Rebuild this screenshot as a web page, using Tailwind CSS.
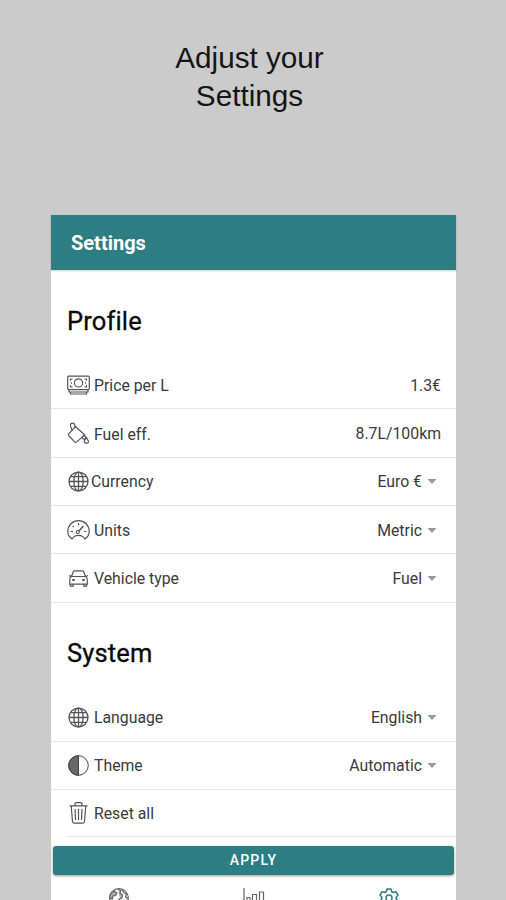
<!DOCTYPE html>
<html lang="en">
<head>
<meta charset="utf-8">
<title>Settings</title>
<script src="https://cdn.jsdelivr.net/npm/@tailwindcss/browser@4"></script>
</head>
<body class="h-[900px] w-[506px] overflow-hidden bg-[#cbcbcb] font-['Roboto',sans-serif] text-[#3a3a3a]">
<svg class="hidden">
  <symbol id="globe" viewBox="0 0 24 24" fill="none" stroke="currentColor" stroke-width="1.5"><circle cx="12" cy="12" r="10.8"/><ellipse cx="12" cy="12" rx="5.3" ry="10.8"/><path d="M12 1v22M1 12h22M3 6.5h18M3 17.5h18"/></symbol>
</svg>
<div class="flex h-full flex-col">
  <h1 class="h-[215px] shrink-0 pt-[39px] pr-[7px] text-center font-['Liberation_Sans',sans-serif] text-[29.7px] leading-[38px] text-[#151515]">Adjust your<br>Settings</h1>
  <main class="ml-[51px] flex h-[685px] w-[405px] flex-col bg-white">
    <header class="flex h-[55px] shrink-0 items-center bg-[#2d7e82] pl-[20px] text-[20px] font-bold text-white shadow-[0_1px_2px_#0003]"><span>Settings</span></header>
    <h2 class="h-[91px] shrink-0 pt-[35px] pl-[16px] text-[25.5px] leading-[32px] tracking-[0.15px] text-[#0a0a0a] [-webkit-text-stroke:0.3px_#0a0a0a]">Profile</h2>
    <section class="text-[15.8px]">
      <div class="flex h-[48px] items-center border-b border-[#e4e4e4] pr-[15px] pl-[16px]">
        <svg class="mr-[4px] h-[20px] w-[23px] text-[#555]" viewBox="0 0 23 20" fill="none" stroke="currentColor" stroke-width="1.2"><rect x=".7" y="1.2" width="21.6" height="13.4" rx="1"/><circle cx="11.5" cy="7.9" r="4.1"/><path d="M2 15v2h19v-2M3.5 17v2h16v-2M3.5 5.8V4h2M17.5 4h2v1.8M3.5 10v2h2M17.5 12h2v-2"/><path d="M4 7.9h1M18 7.9h1" stroke-width="1.5"/></svg>
        <span class="mt-[2px]">Price per L</span><span class="mt-[2px] ml-auto">1.3€</span>
      </div>
      <div class="flex h-[49px] items-center border-b border-[#e4e4e4] pr-[15px] pl-[16px]">
        <svg class="mr-[4px] h-[22px] w-[23px] text-[#555]" viewBox="0 0 23 22" fill="none" stroke="currentColor" stroke-width="1.2"><path d="M8.5 4.5 17.8 13 9.4 20.1q-.9.7-1.8-.2L1.7 13.5q-.7-.8 0-1.6ZM5 8 3.6 4.2q-.7-3 2-3 1.9 0 2.3 2.8l.3 2.1"/><path d="M19.5 15.5q-4 4.5-.9 5.6 3.9.6 2.4-2.8Z"/><circle cx="17" cy="15.6" r="1.6"/></svg>
        <span class="mt-[3px]">Fuel eff.</span><span class="mt-[1px] ml-auto">8.7L/100km</span>
      </div>
      <div class="flex h-[48px] items-center border-b border-[#e4e4e4] pr-[19px] pl-[17px]">
        <svg class="mr-[2px] size-[21px] text-[#555]"><use href="#globe"/></svg>
        <span class="mt-[1px]">Currency</span><span class="mt-[1px] ml-auto">Euro €</span>
        <svg class="ml-[5px] h-[5px] w-[10px]" viewBox="0 0 10 5"><path d="M.5 0h9L5 5Z" fill="#999"/></svg>
      </div>
      <div class="flex h-[48px] items-center border-b border-[#e4e4e4] pr-[19px] pl-[16px]">
        <svg class="mr-[4px] h-[20px] w-[23px] text-[#555]" viewBox="0 0 23 20" fill="none" stroke="currentColor" stroke-width="1.2" stroke-linejoin="round"><path d="M5.2 19Q.8 16.5.8 11.3a10.7 10.7 0 0 1 21.4 0q0 5.2-4.4 7.7l-2-2.5q-4.3-2.4-8.6 0Z"/><path d="M3.6 11.5H6M17 11.5h2.4M11.5 3v2.2M5.7 6l1.2 1.2"/><circle cx="10.8" cy="12" r="1.5"/><path d="m12 11 4.3-5" stroke-width="1.5"/></svg>
        <span class="mt-[2px]">Units</span><span class="mt-[2px] ml-auto">Metric</span>
        <svg class="mt-px ml-[5px] h-[5px] w-[10px]" viewBox="0 0 10 5"><path d="M.5 0h9L5 5Z" fill="#999"/></svg>
      </div>
      <div class="flex h-[49px] items-center border-b border-[#e4e4e4] pr-[19px] pl-[18px]">
        <svg class="mr-[6px] h-[17px] w-[19px] text-[#555]" viewBox="0 0 19 17" fill="none" stroke="currentColor" stroke-width="1.2"><path d="M2.5 6.5 4.3 1.8Q4.6.8 5.6.8h7.8q1 0 1.3 1l1.8 4.7q1.8 1 1.8 3.3v4.4H.7V9.8q0-2.3 1.8-3.3ZM2.5 6.5h14M0 5.5l2.5 1M19 5.5l-2.5 1M1.4 14.2v2h2.8v-2M14.8 14.2v2h2.8v-2"/><path d="M3.2 10h2.5M13.3 10h2.5" stroke-width="1.8"/></svg>
        <span class="mt-[2px]">Vehicle type</span><span class="mt-[2px] ml-auto">Fuel</span>
        <svg class="ml-[5px] h-[5px] w-[10px]" viewBox="0 0 10 5"><path d="M.5 0h9L5 5Z" fill="#999"/></svg>
      </div>
    </section>
    <h2 class="h-[90px] shrink-0 pt-[34px] pl-[16px] text-[25.5px] leading-[32px] tracking-[0.15px] text-[#0a0a0a] [-webkit-text-stroke:0.3px_#0a0a0a]">System</h2>
    <section class="text-[15.8px]">
      <div class="flex h-[49px] items-center border-b border-[#e4e4e4] pr-[19px] pl-[17px]">
        <svg class="mr-[5px] size-[21px] text-[#555]"><use href="#globe"/></svg>
        <span class="mt-[1px]">Language</span><span class="mt-[1px] ml-auto">English</span>
        <svg class="ml-[5px] h-[5px] w-[10px]" viewBox="0 0 10 5"><path d="M.5 0h9L5 5Z" fill="#999"/></svg>
      </div>
      <div class="flex h-[48px] items-center border-b border-[#e4e4e4] pr-[19px] pl-[17px]">
        <svg class="mr-[5px] size-[21px] text-[#444]" viewBox="0 0 21 21" fill="none" stroke="currentColor"><circle cx="10.5" cy="10.5" r="9.8"/><path d="M10.5.7a9.8 9.8 0 0 0 0 19.6Z" fill="#666"/></svg>
        <span class="mt-[1px]">Theme</span><span class="mt-[1px] ml-auto">Automatic</span>
        <svg class="ml-[5px] h-[5px] w-[10px]" viewBox="0 0 10 5"><path d="M.5 0h9L5 5Z" fill="#999"/></svg>
      </div>
      <div class="ml-[16px] flex h-[47px] items-center border-b border-[#e6e6ea] pl-[2px]">
        <svg class="mr-[6px] h-[22px] w-[19px] text-[#555]" viewBox="0 0 19 22" fill="none" stroke="currentColor" stroke-width="1.2"><path d="M.5 3.9h18M6 3.7V2q0-1.3 1.3-1.3h4.4Q13 .7 13 2v1.7M2.2 4l1.3 15.5q.2 1.7 1.7 1.7h8.6q1.5 0 1.7-1.7L16.8 4M9.5 7v11M6 7l.5 11M13 7l-.5 11"/></svg>
        <span class="mt-[1px]">Reset all</span>
      </div>
    </section>
    <button class="mx-[2px] mt-[9px] flex h-[29px] shrink-0 items-center justify-center rounded-[3px] bg-[#2d7e82] text-[14px] font-medium tracking-[1.2px] text-white shadow-[0_1px_3px_#0006]">APPLY</button>
    <nav class="grid h-[25px] grid-cols-3 justify-items-center overflow-hidden pt-[13px] text-[#666]">
      <svg class="size-[20px]" viewBox="0 0 20 20" fill="none" stroke="currentColor" stroke-width="1.2"><circle cx="10" cy="10" r="9.3"/><path d="m3 4 2.5-.7L8 5 6.5 7.5 4 8l-.8 3L1 10V7ZM9 1l3 1.5L11 5l2.5 2-.5 3-3 1 2 4M13.5 1.5l1 3 3 1.5-1 3 2.5 2" fill="#aaa"/></svg>
      <svg class="h-[20px] w-[22px]" viewBox="0 0 22 20" fill="none" stroke="currentColor" stroke-width="1.2"><path d="M1 0v19h21M4 19V9.5h3V19M9.5 19V6.5h4V19M16.5 19V4h4v15"/></svg>
      <svg class="size-[20px] text-[#2d7e82]" viewBox="0 0 20 20" fill="none" stroke="currentColor" stroke-width="1.5" stroke-linejoin="round"><path d="M8 1h4l.6 2.5 1.8 1L17 3.8l2 3.4L17.2 9v2l1.8 1.8-2 3.4-2.6-.7-1.8 1L12 19H8l-.6-2.5-1.8-1-2.6.7-2-3.4L2.8 11V9L1 7.2l2-3.4 2.6.7 1.8-1Z"/><circle cx="10" cy="10" r="3"/></svg>
    </nav>
  </main>
</div>
</body>
</html>
